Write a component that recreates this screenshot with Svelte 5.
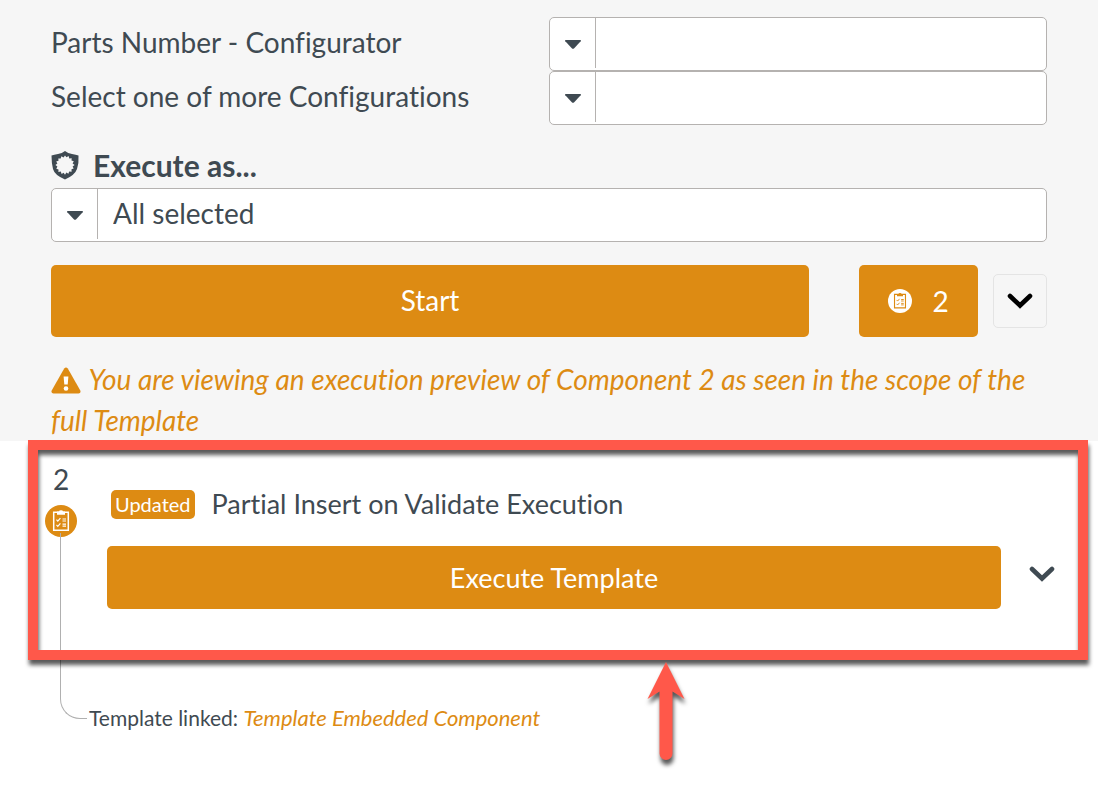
<script lang="ts">
	const fields = [
		{ id: 'parts-number', label: 'Parts Number - Configurator' },
		{ id: 'configurations', label: 'Select one of more Configurations' }
	];

	let executeAs = $state('all');
	let taskCount = 2;
</script>

<svelte:head>
	<title>Execution preview</title>
</svelte:head>

{#snippet caret()}
	<span class="caret">
		<svg viewBox="0 0 18 11" width="18" height="11" aria-hidden="true">
			<path d="M1.8 1h14.4q1.4 0 .5 1.2L10.2 9.2q-1.2 1-2.4 0L1.3 2.2Q.4 1 1.8 1z" fill="#3f4a52" />
		</svg>
	</span>
{/snippet}

{#snippet clipboard(disc, ink, size)}
	<svg viewBox="0 0 32 32" width={size} height={size} aria-hidden="true">
		<circle cx="16" cy="16" r="16" fill={disc} />
		<g fill="none" stroke={ink}>
			<path d="M8.7 7.2h14.6v18H8.7z" stroke-width="1.5" />
			<path d="M11.5 14.600l1.300 1.500 2.600-3M11.500 19.800l1.300 1.500 2.600-3" stroke-width="1.200" />
			<path d="M17.5 14h3.500M17.500 16h3.500M17.500 19.200h3.500M17.500 21.200h3.500" stroke-width="1.200" />
		</g>
		<path d="M12 6.500h2q0-1.200 2-1.200t2 1.200h2v3.200h-8z" fill={ink} />
	</svg>
{/snippet}

{#snippet chevron()}
	<svg viewBox="0 0 26 16" width="26" height="16" aria-hidden="true">
		<path d="M3 3l10 9.5L23 3" fill="none" stroke="currentColor" stroke-width="4.6" stroke-linecap="round" />
	</svg>
{/snippet}

<main>
	<section class="panel">
		{#each fields as field}
			<div class="field">
				<label for={field.id}>{field.label}</label>
				<div class="combo">
					{@render caret()}
					<select id={field.id}>
						<option value=""></option>
					</select>
				</div>
			</div>
		{/each}

		<label class="heading" for="execute-as">
			<svg viewBox="0 0 28 30" width="28" height="30" aria-hidden="true">
				<path
					d="M14 1Q17 3.500 21 4t6.500 1.500Q28 13 26 19T14 29.500Q3.500 25 2 19T.5 5.500Q3 4.500 7 4t7-3z"
					fill="#3f4a52"
				/>
				<path
					d="M14 5.500l1.500 1.800 2.100-1.200.7 2.300 2.400-.2-.2 2.400 2.300.7-1.200 2.100 2 1.500-2 1.500 1.100 2.100-2.200.7.1 2.500-2.400-.3-.8 2.300-2-1.200L14 24.700l-1.400-2-2 1.200-.8-2.300-2.400.3.1-2.500-2.200-.7 1.100-2.100-2-1.500 2-1.500-1.200-2.100 2.300-.7-.2-2.400 2.400.2.700-2.300 2.100 1.200z"
					fill="#f6f6f6"
				/>
			</svg>
			Execute as...
		</label>
		<div class="combo">
			{@render caret()}
			<select id="execute-as" bind:value={executeAs}>
				<option value="all">All selected</option>
			</select>
		</div>

		<div class="actions">
			<button class="primary start">Start</button>
			<button class="primary counter">
				{@render clipboard('#fff', '#dd8b13', 24)}
				{taskCount}
			</button>
			<button class="toggle" aria-label="More options">{@render chevron()}</button>
		</div>

		<p class="notice">
			<svg viewBox="0 0 30 27" width="30" height="27" aria-hidden="true">
				<path
					d="M13.2 1.5q1.8-2 3.6 0l12.5 22q.9 2.500-1.800 3h-25q-2.700-.5-1.800-3z"
					fill="#dd8b13"
				/>
				<path d="M12.6 9.500h4.800l-.7 8h-3.400z" fill="#fff" />
				<circle cx="15" cy="21.500" r="2.300" fill="#fff" />
			</svg>
			You are viewing an execution preview of Component 2 as seen in the scope of the full Template
		</p>
	</section>

	<section class="task">
		<div class="rail">
			<span class="index">2</span>
			{@render clipboard('#dd8b13', '#fff', 32)}
			<span class="connector"></span>
		</div>

		<div class="body">
			<div class="title">
				<span class="badge">Updated</span>
				<span>Partial Insert on Validate Execution</span>
			</div>
			<div class="run">
				<button class="primary execute">Execute Template</button>
				<button class="expand" aria-label="Expand">{@render chevron()}</button>
			</div>
		</div>

		<p class="linked">Template linked: <a href="#template">Template Embedded Component</a></p>

		<div class="callout">
			<svg class="arrow" viewBox="0 0 60 124" width="60" height="124" aria-hidden="true">
				<path
					d="M30 6l18.500 37-12-7.500v62a6.500 6.500 0 0 1-13 0V35.500l-12 7.500z"
					fill="#ff584a"
				/>
			</svg>
		</div>
	</section>
</main>

<style>
	:global(body) {
		margin: 0;
		background: #fff;
	}

	main {
		font-family: Lato, 'Open Sans', sans-serif;
		font-size: 28px;
		font-variant-ligatures: none;
		line-height: 34px;
		color: #3f4a52;
	}

	button,
	select {
		font: inherit;
		font-variant-ligatures: none;
		color: inherit;
		border: none;
		margin: 0;
		padding: 0;
		background: transparent;
	}

	button {
		cursor: pointer;
	}

	svg {
		display: block;
		flex-shrink: 0;
	}

	.panel {
		padding: 17px 51px 0;
		background: #f6f6f6;
	}

	.field {
		display: grid;
		grid-template-columns: 1fr 1fr;
		align-items: center;
	}

	.field label {
		padding-bottom: 4px;
	}

	.combo {
		display: flex;
		height: 54px;
		box-sizing: border-box;
		border: 1px solid #b5b2b0;
		border-radius: 5px;
		background: #fff;
	}

	.caret {
		display: flex;
		align-items: center;
		justify-content: center;
		width: 46px;
		height: 50px;
		padding-top: 2px;
		box-sizing: border-box;
		border-right: 1px solid #b5b2b0;
	}

	.combo select {
		flex: 1;
		min-width: 0;
		padding: 0 15px 4px;
		appearance: none;
		outline: none;
	}

	.heading {
		display: flex;
		align-items: center;
		gap: 14px;
		margin-top: 23px;
		padding-bottom: 6px;
		font-size: 30px;
		font-weight: 700;
	}

	.actions {
		display: flex;
		align-items: center;
		margin: 23px 0 22px;
	}

	.primary {
		background: #dd8b13;
		border-radius: 5px;
		color: #fff;
	}

	.start {
		flex: 1;
		height: 72px;
		margin-right: 50px;
		padding-bottom: 2px;
	}

	.counter {
		display: flex;
		align-items: center;
		justify-content: center;
		gap: 20px;
		width: 119px;
		height: 72px;
		margin-right: 15px;
	}

	.toggle {
		display: flex;
		align-items: center;
		justify-content: center;
		width: 54px;
		height: 54px;
		border: 1px solid #e4e4e4;
		border-radius: 5px;
		color: #000;
	}

	.notice {
		margin: 0;
		font-size: 28px;
		font-style: italic;
		line-height: 41px;
		color: #dd8b13;
	}

	.notice svg {
		display: inline-block;
		margin-right: 2px;
		vertical-align: -4px;
	}

	.task {
		position: relative;
		display: grid;
		grid-template-columns: 42px 1fr;
		column-gap: 2px;
		padding: 21px 43px 54px 45px;
	}

	.rail {
		grid-row: 1 / 3;
		display: flex;
		flex-direction: column;
	}

	.index {
		width: 32px;
		margin-bottom: 9px;
		text-align: center;
	}

	.connector {
		flex: 1;
		margin: -4px 0 16px 15px;
		border: solid #b0b0b0;
		border-width: 0 0 1px 1px;
		border-bottom-left-radius: 20px;
	}

	.body {
		padding: 25px 0 92px 18px;
		font-size: 27px;
	}

	.title {
		display: flex;
		align-items: center;
		gap: 17px;
		margin-bottom: 25px;
	}

	.badge {
		margin-left: 4px;
		padding: 0 4px;
		border-radius: 5px;
		background: #dd8b13;
		color: #fff;
		font-size: 20px;
		line-height: 29px;
	}

	.run {
		display: flex;
		align-items: center;
		gap: 28px;
	}

	.execute {
		flex: 1;
		height: 63px;
	}

	.expand {
		padding-bottom: 8px;
	}

	.linked {
		grid-column: 2;
		margin: 0;
		font-size: 21px;
	}

	.linked a {
		font-size: 22px;
		font-style: italic;
		color: #dd8b13;
		text-decoration: none;
	}

	.callout {
		position: absolute;
		top: -1px;
		left: 28px;
		right: 10px;
		height: 220px;
		box-sizing: border-box;
		border: 10px solid #ff584a;
		filter: drop-shadow(1px 5px 2px rgba(0, 0, 0, 0.65));
		pointer-events: none;
	}

	.arrow {
		position: absolute;
		top: 206px;
		left: calc(60% - 26px);
	}
</style>
